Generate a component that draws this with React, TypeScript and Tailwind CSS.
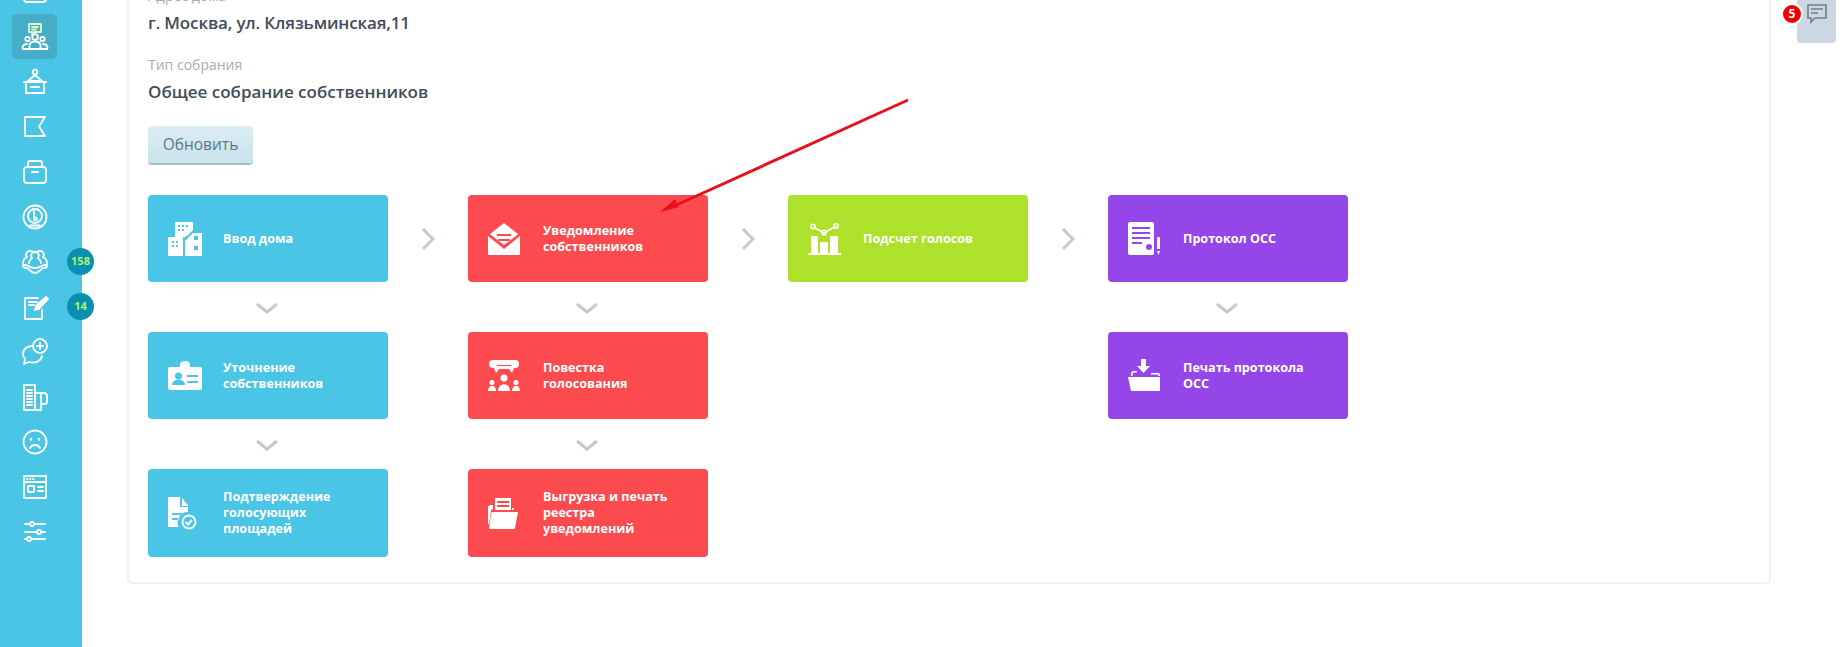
const font = { fontFamily: '"Open Sans", "Noto Sans", sans-serif' };

type IconProps = { className?: string };

const Side = ({ children }: { children: React.ReactNode }) => (
  <svg viewBox="0 0 28 28" width="28" height="28" fill="none" stroke="currentColor" strokeWidth="1.800" strokeLinecap="round" strokeLinejoin="round">
    {children}
  </svg>
);

const sideIcons = [
  <Side key="top"><rect x="3" y="8" width="22" height="16" rx="3" /><path d="M6 16h16" /></Side>,
  <Side key="meeting">
    <path d="M8 1h12v8h-7l-2 2V9H8z" stroke="#dff5c8" /><path d="M11 4h6M11 6.500h4" stroke="#dff5c8" />
    <circle cx="14" cy="14" r="2.800" /><circle cx="6.500" cy="16" r="2.200" /><circle cx="21.500" cy="16" r="2.200" />
    <path d="M8.500 26v-3c0-3 2.500-4.500 5.500-4.500s5.500 1.500 5.500 4.500v3z" /><path d="M8 26H2c-1 0-1-5 4-5M20 26h6c1 0 1-5-4-5" />
  </Side>,
  <Side key="speaker">
    <circle cx="14" cy="4" r="2.300" /><path d="M14 7l-7 6h14zM3 14h22M5 14v11h18V14M10 19h8" />
  </Side>,
  <Side key="flag"><path d="M4 4h20l-6 9.500 6 9.500H4z" /></Side>,
  <Side key="box"><path d="M7 9V5q0-2 2-2h10q2 0 2 2v4" /><rect x="3" y="9" width="22" height="16" rx="3" /><path d="M11 14h6" /></Side>,
  <Side key="gauge">
    <circle cx="14" cy="14" r="11.500" /><circle cx="14" cy="13" r="7" /><path d="M13 8l0 8c0 2 3 2 3 0s-3-2-3-1M9 22.500h10" />
  </Side>,
  <Side key="people">
    <path d="M2 15c0-3 2-5 4-6-2-3 0-6 3-6 2 0 3 1 5 1s3-1 5-1c3 0 5 3 3 6 2 1 4 3 4 6" />
    <path d="M8 15c0-3 2-4 3-5-2-3 0-6 3-6s5 3 3 6c1 1 3 2 3 5" />
    <path d="M2 17c5-1 6 3 12 3s7-4 12-3c0 2-1 3-3 3-4 0-4 5-9 5s-5-5-9-5c-2 0-3-1-3-3z" />
  </Side>,
  <Side key="note">
    <path d="M21 17v9H4V5h13" /><path d="M8 9h8M8 12h5" /><path d="M25 4l2 2-9 10-4 1 1-4z" fill="currentColor" />
  </Side>,
  <Side key="chat">
    <path d="M11 8C5 8 2 12 2 16c0 3 1 4 2 5l-1 5 5-2c6 2 12-1 13-6" /><circle cx="19" cy="8" r="7" /><path d="M19 5v6M16 8h6" strokeWidth="2" />
  </Side>,
  <Side key="tower">
    <path d="M3 2h11v25H3zM14 10h9q3 0 3 3v6q0 2-3 2h-3v6h-6M20 10v11" /><path d="M6 7h5M6 10h5M6 13h5M6 16h5M6 19h5M6 22h5" />
  </Side>,
  <Side key="sad">
    <circle cx="14" cy="14" r="11.500" /><path d="M9 20c2-4 8-4 10 0" /><path d="M10 11v.5M18 11v.5" strokeWidth="2.400" />
  </Side>,
  <Side key="window">
    <rect x="3" y="3" width="22" height="22" /><path d="M3 9h22M6 6h.5M9 6h.5M12 6h.5M17 14h5M17 18h5" /><rect x="7" y="13" width="6" height="6" />
  </Side>,
  <Side key="sliders">
    <path d="M4 6h5M13 6h11M4 14h12M20 14h4M4 21h2M10 21h14" /><circle cx="11" cy="6" r="2" /><circle cx="18" cy="14" r="2" /><circle cx="8" cy="21" r="2" />
  </Side>,
];

const Buildings = ({ className }: IconProps) => (
  <svg viewBox="0 0 34 34" className={className} fill="currentColor" fillRule="evenodd">
    <path d="M7 0h18v8l-6 6h-1l-2 2v-1H7zM10 3v2h2V3zM14 3v2h2V3zM18 3v2h2V3zM10 7v2h2V7zM14 7v2h2V7z" />
    <path d="M0 15h15v19H0zM4 19v2h2v-2zM8 19v2h2v-2zM4 23v2h2v-2zM8 23v2h2v-2z" />
    <path d="M17 34V19l8-8h9v23zM26 14v4h4v-4zM26 24v4h4v-4z" />
  </svg>
);
const Envelope = ({ className }: IconProps) => (
  <svg viewBox="0 0 32 32" className={className} fill="currentColor" fillRule="evenodd">
    <path d="M16 0l14 11-1 1-13 10L3 12l-1-1zM9 11v2h14v-2zM10 16v2h12v-2z" />
    <path d="M0 13l16 13 16-13v18q0 1-1 1H1q-1 0-1-1z" />
  </svg>
);
const Chart = ({ className }: IconProps) => (
  <svg viewBox="0 0 33 32" className={className} fill="currentColor">
    <path d="M5 4l11 6 12-7" fill="none" stroke="currentColor" strokeWidth="1.500" />
    <circle cx="5" cy="3.500" r="2.200" fill="none" stroke="currentColor" strokeWidth="1.500" />
    <circle cx="16" cy="9.500" r="2.200" fill="none" stroke="currentColor" strokeWidth="1.500" />
    <circle cx="28" cy="3" r="2.200" fill="none" stroke="currentColor" strokeWidth="1.500" />
    <path d="M3 13h7v17H3zM12 19h8v11h-8zM22 13h8v17h-8zM0 30h33v2H0z" />
  </svg>
);
const Protocol = ({ className }: IconProps) => (
  <svg viewBox="0 0 33 33" className={className} fill="currentColor" fillRule="evenodd">
    <path d="M2 0h22q2 0 2 2v29q0 2-2 2H2q-2 0-2-2V2q0-2 2-2zM4 5v2h18V5zM4 10v2h18v-2zM4 15v2h18v-2zM4 20v2h10v-2zM18 25a3 3 0 1 0 6 0a3 3 0 1 0-6 0z" />
    <path d="M29 15h3v12h-3zM29 29h3l-1.500 4z" />
  </svg>
);
const IdCard = ({ className }: IconProps) => (
  <svg viewBox="0 0 34 29" className={className} fill="currentColor" fillRule="evenodd">
    <path d="M12 6V4q0-4 5-4t5 4v2h10q2 0 2 2v19q0 2-2 2H2q-2 0-2-2V8q0-2 2-2zM7 15a3.500 3.500 0 1 0 7 0a3.500 3.500 0 1 0-7 0zM4 24h13c0-7-13-7-13 0zM19 14v2h11v-2zM19 20v2h11v-2z" />
  </svg>
);
const Agenda = ({ className }: IconProps) => (
  <svg viewBox="0 0 32 32" className={className} fill="currentColor" fillRule="evenodd">
    <path d="M5 0h22q4 0 4 4t-4 4h-1l-2 5-3-4H11l-3 4-2-5H5Q1 8 1 4t4-4zM9 5v1h14V5z" />
    <circle cx="16" cy="18" r="3.500" /><path d="M10 31c0-9 12-9 12 0z" />
    <circle cx="4" cy="22.500" r="2.500" /><path d="M0 31c0-7 8-7 8 0z" />
    <circle cx="28" cy="22.500" r="2.500" /><path d="M24 31c0-7 8-7 8 0z" />
  </svg>
);
const FolderDown = ({ className }: IconProps) => (
  <svg viewBox="0 0 33 33" className={className} fill="currentColor">
    <path d="M13 0h5v7h4l-6.500 7L9 7h4z" />
    <path d="M3 17v-2q0-3 3-3h3v1.500H6q-1.500 0-1.500 1.500v2zM23 14h7q2 0 2 2v1h-2v-1q0-.5-.5-.5H23z" />
    <path d="M0 18h32v14H4q-1 0-1.200-1z" />
  </svg>
);
const DocCheck = ({ className }: IconProps) => (
  <svg viewBox="0 0 29 33" className={className} fill="currentColor" fillRule="evenodd">
    <path d="M0 0h12v10h8v5a10.500 10.500 0 0 0-9.500 15H0zM4 16v2h9l1.500-2zM4 21v2h7l.5-2z" />
    <path d="M14 1l6.500 8H14z" />
    <circle cx="21" cy="25" r="6.500" fill="none" stroke="currentColor" strokeWidth="2" />
    <path d="M17.500 25l2.500 2.500 4-4.500" fill="none" stroke="currentColor" strokeWidth="2" />
  </svg>
);
const FolderPrint = ({ className }: IconProps) => (
  <svg viewBox="0 0 30 32" className={className} fill="currentColor" fillRule="evenodd">
    <path d="M7 1h16v12H7zM9 4v2h12V4zM9 8v2h12V8z" />
    <path d="M3 8h2v4q-2 0-2 2L1 27H0V11q0-3 3-3z" />
    <path d="M5 15h25l-3 16q0 1-1 1H2q-1 0-1-1l2-14q0-2 2-2z" />
    <path d="M24 11h2v2h-2z" />
  </svg>
);

const tones: Record<string, string> = {
  blue: "bg-[#4bc5e6]",
  red: "bg-[#fc4b4f]",
  green: "bg-[#aee12b]",
  purple: "bg-[#9446e8]",
};

const Step = ({ tone, icon, lines }: { tone: string; icon: React.ReactNode; lines: string[] }) => (
  <div className={`${tones[tone]} flex items-center rounded-[4px] pl-5 text-white`}>
    <div className="flex w-[55px] shrink-0 items-center">{icon}</div>
    <div className="text-[12.6px] leading-4 font-bold">
      {lines.map((l) => (
        <div key={l}>{l}</div>
      ))}
    </div>
  </div>
);

const ArrowRight = () => (
  <div className="flex items-center justify-center">
    <svg viewBox="0 0 14 24" width="14" height="24" fill="none" stroke="#c3c9ce" strokeWidth="3">
      <path d="M2 2l10 10L2 22" />
    </svg>
  </div>
);
const ArrowDown = () => (
  <div className="flex items-center justify-center pt-1 pr-0.5">
    <svg viewBox="0 0 24 14" width="24" height="14" fill="none" stroke="#c3c9ce" strokeWidth="3">
      <path d="M2 2l10 8 10-8" />
    </svg>
  </div>
);

const App = () => {
  return (
    <div className="relative flex h-[647px] w-[1842px] overflow-hidden bg-white text-[#414d5c]" style={font}>
      <aside className="flex w-[82px] shrink-0 flex-col items-start bg-[#4bc5e6] pl-3 text-white">
        <div className="-mt-[31px] flex flex-col items-center">
          {sideIcons.map((icon, i) => (
            <div
              key={i}
              className={`flex h-[45px] w-[45px] items-center justify-center rounded-[5px] ${i === 1 ? "bg-[#46adc9]" : ""}`}
            >
              {icon}
            </div>
          ))}
        </div>
      </aside>

      <main className="min-w-0 flex-1 pl-[45px]">
        <section className="-mt-[24px] h-[608px] w-[1644px] rounded-b-[5px] border-2 border-[#f0f1f2] pt-[8px] pl-[19px]">
          <div className="text-sm leading-5 text-[#a5acb8]">Адрес дома</div>
          <div className="mt-[5px] text-[17px] leading-6 font-semibold tracking-[-0.15px]">г. Москва, ул. Клязьминская,11</div>
          <div className="mt-[20px] text-sm leading-5 text-[#a5acb8]">Тип собрания</div>
          <div className="mt-[5px] text-[17px] leading-6 font-semibold">Общее собрание собственников</div>
          <button className="mt-[22px] flex h-[39px] w-[105px] items-center justify-center rounded-[4px] border-b-2 border-[#9fc3cc] bg-gradient-to-b from-[#dcedf3] to-[#c9e2ea] text-[15.500px] text-[#5d7a85]">
            Обновить
          </button>
          <div className="mt-[30px] grid grid-cols-[240px_80px_240px_80px_240px_80px_240px] grid-rows-[87px_50px_87px_50px_88px]">
            <Step tone="blue" icon={<Buildings className="h-[34px] w-[34px]" />} lines={["Ввод дома"]} />
            <ArrowRight />
            <Step tone="red" icon={<Envelope className="h-[32px] w-[32px]" />} lines={["Уведомление", "собственников"]} />
            <ArrowRight />
            <Step tone="green" icon={<Chart className="h-[32px] w-[33px]" />} lines={["Подсчет голосов"]} />
            <ArrowRight />
            <Step tone="purple" icon={<Protocol className="h-[33px] w-[33px]" />} lines={["Протокол ОСС"]} />

            <ArrowDown />
            <div />
            <ArrowDown />
            <div />
            <div />
            <div />
            <ArrowDown />

            <Step tone="blue" icon={<IdCard className="h-[29px] w-[34px]" />} lines={["Уточнение", "собственников"]} />
            <div />
            <Step tone="red" icon={<Agenda className="h-[32px] w-[32px]" />} lines={["Повестка", "голосования"]} />
            <div />
            <div />
            <div />
            <Step tone="purple" icon={<FolderDown className="h-[33px] w-[33px]" />} lines={["Печать протокола", "ОСС"]} />

            <ArrowDown />
            <div />
            <ArrowDown />
            <div />
            <div />
            <div />
            <div />

            <Step tone="blue" icon={<DocCheck className="h-[33px] w-[29px]" />} lines={["Подтверждение", "голосующих", "площадей"]} />
            <div />
            <Step tone="red" icon={<FolderPrint className="h-[32px] w-[30px]" />} lines={["Выгрузка и печать", "реестра", "уведомлений"]} />
          </div>
        </section>
      </main>

      <div className="absolute top-[248px] left-[67px] flex h-[27px] w-[27px] items-center justify-center rounded-full bg-[#0a8fb0] text-[11px] font-bold text-[#a8f56f]">158</div>
      <div className="absolute top-[293px] left-[67px] flex h-[27px] w-[27px] items-center justify-center rounded-full bg-[#0a8fb0] text-[11px] font-bold text-[#a8f56f]">14</div>

      <div className="absolute top-0 left-[1797px] flex h-[43px] w-[39px] justify-center rounded-b-[4px] bg-[#cdd7e3] pt-[3px]">
        <svg viewBox="0 0 22 22" width="22" height="22" fill="none" stroke="#6f8088" strokeWidth="1.600">
          <path d="M2 2h18v13H9l-4 4v-4H2z" />
          <path d="M5 6h12M5 10h7" />
        </svg>
      </div>
      <div className="absolute top-[3px] left-[1781px] flex h-[22px] w-[22px] items-center justify-center rounded-full border-2 border-white bg-[#f00000] text-[12px] font-bold text-white">5</div>

      <svg className="pointer-events-none absolute top-0 left-0" width="1842" height="647" fill="none">
        <path d="M908 100L672 207" stroke="#e8101a" strokeWidth="3" />
        <path d="M660 212l15-13 4 8z" fill="#e8101a" />
      </svg>
    </div>
  );
};

export default App;
